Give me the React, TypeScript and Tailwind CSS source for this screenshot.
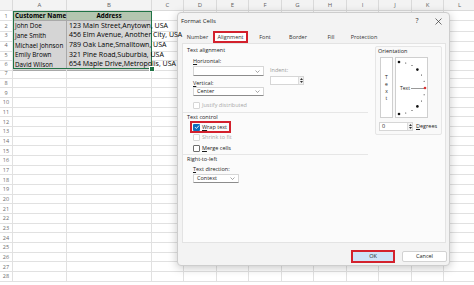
import clsx from 'clsx'

const GRID =
  'grid grid-cols-[13px_54px_85px_32px_33px_32px_33px_32px_33px_32px_33px_32px_32px]'
const COLS = ['A', 'B', 'C', 'D', 'E', 'F', 'G', 'H', 'I', 'J', 'K', 'L']
const DATA = [
  ['Customer Name', 'Address'],
  ['John Doe', '123 Main Street,Anytown, USA'],
  ['Jane Smith', '456 Elm Avenue, Another City, USA'],
  ['Michael Johnson', '789 Oak Lane,Smalltown, USA'],
  ['Emily Brown', '321 Pine Road,Suburbia, USA'],
  ['David Wilson', '654 Maple Drive,Metropolis, USA'],
]
const ROWS = Array.from({ length: 28 }, (_, i) => i + 1)

function Sheet() {
  return (
    <div className="relative">
      <div className={`${GRID} h-[11px] bg-[#f3f3f3]`}>
        <div className="border-r border-b border-[#dadada]" />
        {COLS.map((c) => (
          <div
            key={c}
            className="border-r border-b border-[#dadada] flex items-center justify-center text-[6px] text-[#616161]"
          >
            {c}
          </div>
        ))}
      </div>

      {ROWS.map((n) => {
        const row = DATA[n - 1]
        const head = n === 1
        return (
          <div key={n} className={`${GRID} h-[9.68px]`}>
            <div className="border-r border-b border-[#e1e1e1] flex items-center justify-center text-[5.5px] text-[#6a6a6a]">
              {n}
            </div>
            {row ? (
              <>
                <div
                  className={clsx(
                    'border-r border-b border-[#a9a9a9] flex items-center pl-[2px] text-[6.3px] text-black whitespace-nowrap',
                    head ? 'bg-[#b4c6b0] font-bold' : 'bg-[#d5d5d5]'
                  )}
                >
                  {row[0]}
                </div>
                <div
                  className={clsx(
                    'border-r border-b border-[#a9a9a9] flex items-center text-black whitespace-nowrap',
                    head ? 'bg-[#b4c6b0] font-bold justify-center text-[6.3px]' : 'bg-[#d5d5d5] pl-[2px] text-[7px]'
                  )}
                >
                  <span className="relative z-10">{row[1]}</span>
                </div>
              </>
            ) : (
              <>
                <div className="border-r border-b border-[#e1e1e1]" />
                <div className="border-r border-b border-[#e1e1e1]" />
              </>
            )}
            {COLS.slice(2).map((c) => (
              <div key={c} className="border-r border-b border-[#e1e1e1]" />
            ))}
          </div>
        )
      })}

      {/* selection A1:B6 */}
      <div className="absolute left-[13px] top-[11px] w-[139px] h-[58.1px] border-[1.5px] border-[#217346] pointer-events-none">
        <div className="absolute -right-[3px] -bottom-[3px] w-[4px] h-[4px] bg-[#217346] ring-1 ring-white" />
      </div>
    </div>
  )
}

function Box({ checked, disabled }: { checked?: boolean; disabled?: boolean }) {
  if (checked)
    return (
      <span className="w-[7px] h-[7px] rounded-[1px] bg-[#0f6cbd] flex items-center justify-center shrink-0">
        <svg width="6" height="6" viewBox="0 0 6 6">
          <path d="M1 3.1 2.4 4.5 5.1 1.5" fill="none" stroke="#fff" strokeWidth="0.9" />
        </svg>
      </span>
    )
  return (
    <span
      className={clsx(
        'w-[7px] h-[7px] rounded-[1px] border bg-white shrink-0',
        disabled ? 'border-[#d6d6d6]' : 'border-[#6e6e6e]'
      )}
    />
  )
}

function Chevron() {
  return (
    <svg width="5" height="3" viewBox="0 0 5 3" className="ml-auto shrink-0">
      <path d="M0.5 0.5 2.5 2.5 4.5 0.5" fill="none" stroke="#6b6b6b" strokeWidth="0.6" />
    </svg>
  )
}

function Combo({ w, h, text }: { w: string; h: string; text?: string }) {
  return (
    <div
      className={clsx(
        'bg-white border border-[#d6d6d6] border-b-[#8c8c8c] rounded-[1px] flex items-center pl-[3px] pr-[3px]',
        w,
        h
      )}
    >
      <span>{text}</span>
      <Chevron />
    </div>
  )
}

function Spin() {
  return (
    <div className="w-[5px] h-full flex flex-col items-center justify-center gap-[1px] bg-[#f2f2f2] border-l border-[#dcdcdc]">
      <svg width="3" height="2" viewBox="0 0 3 2">
        <path d="M0 2 1.5 0 3 2Z" fill="#333" />
      </svg>
      <svg width="3" height="2" viewBox="0 0 3 2">
        <path d="M0 0 1.5 2 3 0Z" fill="#333" />
      </svg>
    </div>
  )
}

function Dial() {
  const dots = Array.from({ length: 13 }, (_, i) => -90 + i * 15)
  return (
    <div className="w-[33px] h-[61px] bg-white border border-[#cfcfcf]">
      <svg width="31" height="59" viewBox="0 0 31 59">
        {dots.map((a) => {
          const r = (a * Math.PI) / 180
          const x = 3 + 26 * Math.cos(r)
          const y = 30 + 26 * Math.sin(r)
          const big = Math.abs(a) === 90 || Math.abs(a) === 45
          if (a === 0) return <circle key={a} cx={x} cy={y} r="1.3" fill="#d33" />
          return <circle key={a} cx={x} cy={y} r={big ? 1.3 : 0.5} fill="#111" />
        })}
        <text x="4" y="32" fontSize="5" fill="#222" fontFamily="Open Sans, sans-serif">
          Text
        </text>
        <line x1="15" y1="30.5" x2="28" y2="30.5" stroke="#333" strokeWidth="0.5" />
      </svg>
    </div>
  )
}

const TABS = [
  { label: 'Number', w: 'w-[31px]' },
  { label: 'Alignment', w: 'w-[35px]', active: true },
  { label: 'Font', w: 'w-[34px]' },
  { label: 'Border', w: 'w-[32px]' },
  { label: 'Fill', w: 'w-[34px]' },
  { label: 'Protection', w: 'w-[32px]' },
]

function FormatCells() {
  return (
    <div className="absolute left-[177px] top-[12px] w-[273px] h-[254px] bg-[#f3f3f3] border border-[#cdcdcd] rounded-[4px] shadow-[0_2px_10px_rgba(0,0,0,0.22)] flex flex-col text-[5.5px] text-[#1b1b1b] whitespace-nowrap">
      {/* title bar */}
      <div className="h-[18px] pb-[2px] flex items-center pl-[3px]">
        <span className="text-[6px]">Format Cells</span>
        <span className="ml-auto w-[14px] text-center text-[7px] text-[#333]">?</span>
        <svg width="7" height="7" viewBox="0 0 7 7" className="ml-[11px] mr-[7px]">
          <path d="M0.5 0.5 6.5 6.5M6.5 0.5 0.5 6.5" stroke="#333" strokeWidth="0.7" />
        </svg>
      </div>

      {/* tabs */}
      <div className="h-[12px] flex ml-[4px]">
        {TABS.map((t) => (
          <div
            key={t.label}
            className={clsx(
              'h-full flex items-center justify-center text-[#333]',
              t.w,
              t.active && 'bg-white border-2 border-[#d3212d] h-[11px]'
            )}
          >
            {t.label}
          </div>
        ))}
      </div>

      {/* tab panel */}
      <div className="h-[200px] ml-[4px] mr-[3px] bg-[#fbfbfb] border border-[#e3e3e3] flex">
        <div className="w-[185px] pt-[2px] flex flex-col">
          <div className="h-[9px] flex items-center pl-[4px]">Text alignment</div>
          <div className="pl-[10px] flex">
            <div className="w-[71px] flex flex-col">
              <div className="mt-[2px] h-[8px] flex items-center">
                <span className="underline">H</span>orizontal:
              </div>
              <div className="mt-[1px]">
                <Combo w="w-[71px]" h="h-[10px]" />
              </div>
              <div className="mt-[3px] h-[8px] flex items-center">
                <span className="underline">V</span>ertical:
              </div>
              <Combo w="w-[71px]" h="h-[9px]" text="Center" />
            </div>
            <div className="ml-[6px] pt-[11px] flex flex-col">
              <div className="h-[8px] flex items-center text-[#9a9a9a]">Indent:</div>
              <div className="mt-[2px] w-[34px] h-[9px] bg-white border border-[#d6d6d6] flex justify-end">
                <Spin />
              </div>
            </div>
          </div>
          <div className="mt-[5px] h-[8px] pl-[10px] flex items-center gap-[2px] text-[#a8a8a8]">
            <Box disabled />
            Justify distributed
          </div>

          <div className="mt-[3px] border-t border-[#e6e6e6] h-[9px] flex items-center pl-[4px]">
            Text control
          </div>
          <div className="ml-[7px] w-[41px] h-[12px] border-2 border-[#d3212d] flex items-center gap-[2px] pl-[1px]">
            <Box checked />
            <span>
              <span className="underline">W</span>rap text
            </span>
          </div>
          <div className="h-[8px] pl-[10px] flex items-center gap-[2px] text-[#a8a8a8]">
            <Box disabled />
            Shrink to fit
          </div>
          <div className="mt-[3px] h-[8px] pl-[10px] flex items-center gap-[2px]">
            <Box />
            <span>
              <span className="underline">M</span>erge cells
            </span>
          </div>

          <div className="mt-[2px] border-t border-[#e6e6e6] h-[9px] flex items-center pl-[4px]">
            Right-to-left
          </div>
          <div className="mt-[2px] h-[8px] pl-[10px] flex items-center">
            <span className="underline">T</span>ext direction:
          </div>
          <div className="mt-[1px] pl-[10px]">
            <Combo w="w-[46px]" h="h-[9px]" text="Context" />
          </div>
        </div>

        {/* orientation */}
        <div className="ml-[7px] mt-[2px] w-[67px] h-[89px] border border-[#e6e6e6] rounded-[2px] bg-[#f9f9f9] flex flex-col">
          <div className="h-[9px] flex items-center pl-[2px]">Orientation</div>
          <div className="mt-[1px] pl-[4px] flex gap-[2px]">
            <div className="w-[13px] h-[61px] bg-white border border-[#cfcfcf] flex flex-col items-center justify-center leading-[7px] text-[5px]">
              <span>T</span>
              <span>e</span>
              <span>x</span>
              <span>t</span>
            </div>
            <Dial />
          </div>
          <div className="mt-[4px] pl-[3px] h-[9px] flex items-center">
            <div className="w-[34px] h-full bg-white border border-[#d6d6d6] flex items-center pl-[2px]">
              <span>0</span>
              <div className="ml-auto h-full">
                <Spin />
              </div>
            </div>
            <span className="ml-[3px]">
              <span className="underline">D</span>egrees
            </span>
          </div>
        </div>
      </div>

      {/* footer */}
      <div className="flex-1 flex justify-end items-start pt-[7px] pr-[2px] gap-[7px]">
        <div className="w-[44px] h-[13px] border-2 border-[#d3212d] bg-[#cfe3f7] flex items-center justify-center">
          OK
        </div>
        <div className="mt-[1px] w-[45px] h-[11px] bg-white border border-[#d2d2d2] rounded-[2px] flex items-center justify-center">
          Cancel
        </div>
      </div>
    </div>
  )
}

export default function App() {
  return (
    <div className="relative w-[474px] h-[285px] overflow-hidden bg-white font-['Open_Sans',sans-serif]">
      <Sheet />
      <FormatCells />
    </div>
  )
}
